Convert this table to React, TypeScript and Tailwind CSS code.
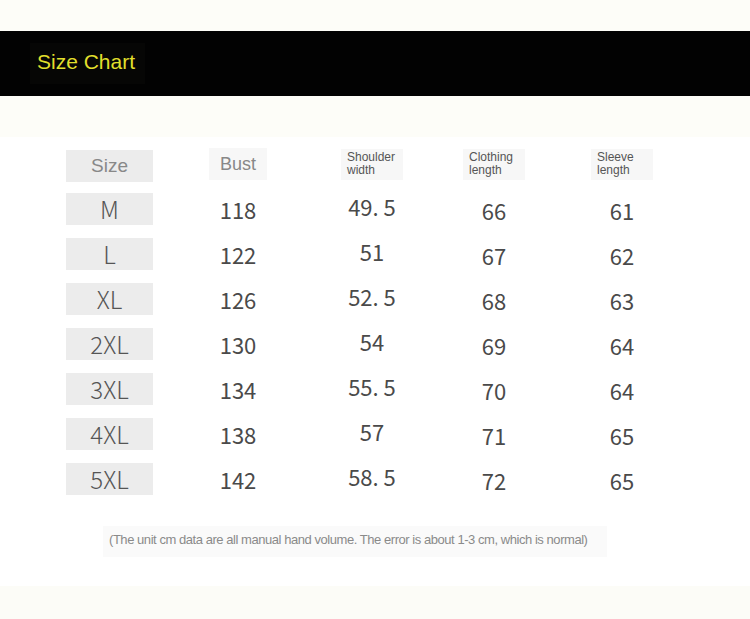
const rows = [
  { size: "M", bust: "118", shoulder: "49. 5", length: "66", sleeve: "61" },
  { size: "L", bust: "122", shoulder: "51", length: "67", sleeve: "62" },
  { size: "XL", bust: "126", shoulder: "52. 5", length: "68", sleeve: "63" },
  { size: "2XL", bust: "130", shoulder: "54", length: "69", sleeve: "64" },
  { size: "3XL", bust: "134", shoulder: "55. 5", length: "70", sleeve: "64" },
  { size: "4XL", bust: "138", shoulder: "57", length: "71", sleeve: "65" },
  { size: "5XL", bust: "142", shoulder: "58. 5", length: "72", sleeve: "65" },
];

const arial = { fontFamily: '"Liberation Sans", Arial, sans-serif' };
const cjk = { fontFamily: '"Noto Sans CJK SC", "Noto Sans", sans-serif' };

function SmallHead({ top, bottom }: { top: string; bottom: string }) {
  return (
    <div className="mt-[1px] h-[31px] w-[62px] bg-[#f7f7f7] px-[6px] pt-[2px] text-[12px] leading-[13px] text-[#555]">
      <div>{top}</div>
      <div>{bottom}</div>
    </div>
  );
}

export default function App() {
  return (
    <div className="flex h-[619px] w-[750px] flex-col bg-[#fdfdf8]" style={arial}>
      <div className="h-[31px]" />

      {/* Title band */}
      <div className="flex h-[65px] items-center bg-[#020202] pl-[30px]">
        <div className="flex h-[41px] w-[115px] items-center bg-[#060605] pb-[4px] pl-[7px] text-[21px] text-[#e1df2c]">
          Size Chart
        </div>
      </div>

      <div className="h-[41px]" />

      {/* Chart */}
      <div className="flex flex-1 flex-col bg-white pl-[66px] pt-[11px]">
        {/* Header */}
        <div className="flex h-[34px] items-start">
          <div className="w-[87px]">
            <div className="mt-[2px] flex h-[32px] items-center justify-center bg-[#ececec] text-[19px] text-[#888]">
              Size
            </div>
          </div>
          <div className="flex w-[170px] justify-center">
            <div className="flex h-[32px] w-[58px] items-center justify-center bg-[#f7f7f7] text-[18px] text-[#888]">
              Bust
            </div>
          </div>
          <div className="flex w-[98px] justify-center">
            <SmallHead top="Shoulder" bottom="width" />
          </div>
          <div className="flex w-[146px] justify-center">
            <SmallHead top="Clothing" bottom="length" />
          </div>
          <div className="flex w-[110px] justify-center">
            <SmallHead top="Sleeve" bottom="length" />
          </div>
        </div>

        {/* Rows */}
        <div className="mt-[11px] flex flex-col gap-[13px] text-[#4a4a4a]" style={cjk}>
          {rows.map((r) => (
            <div key={r.size} className="flex h-[32px] items-center text-[22px]">
              <div className="flex h-[32px] w-[87px] items-center justify-center bg-[#ececec] text-[24px] font-light text-[#555]">
                {r.size}
              </div>
              <div className="w-[170px] text-center">{r.bust}</div>
              <div className="w-[98px] pb-[5px] text-center">{r.shoulder}</div>
              <div className="w-[146px] pt-[2px] text-center">{r.length}</div>
              <div className="w-[110px] pt-[2px] text-center">{r.sleeve}</div>
            </div>
          ))}
        </div>

        {/* Note */}
        <div className="ml-[37px] mt-[31px] flex h-[31px] w-[504px] items-center bg-[#fafafa] pb-[4px] pl-[6px]">
          <span className="text-[13px] tracking-[-0.45px] text-[#8a8a8a]">
            (The unit cm data are all manual hand volume. The error is about 1-3 cm, which is normal)
          </span>
        </div>
      </div>

      <div className="h-[33px] bg-[#fcfcf7]" />
    </div>
  );
}
